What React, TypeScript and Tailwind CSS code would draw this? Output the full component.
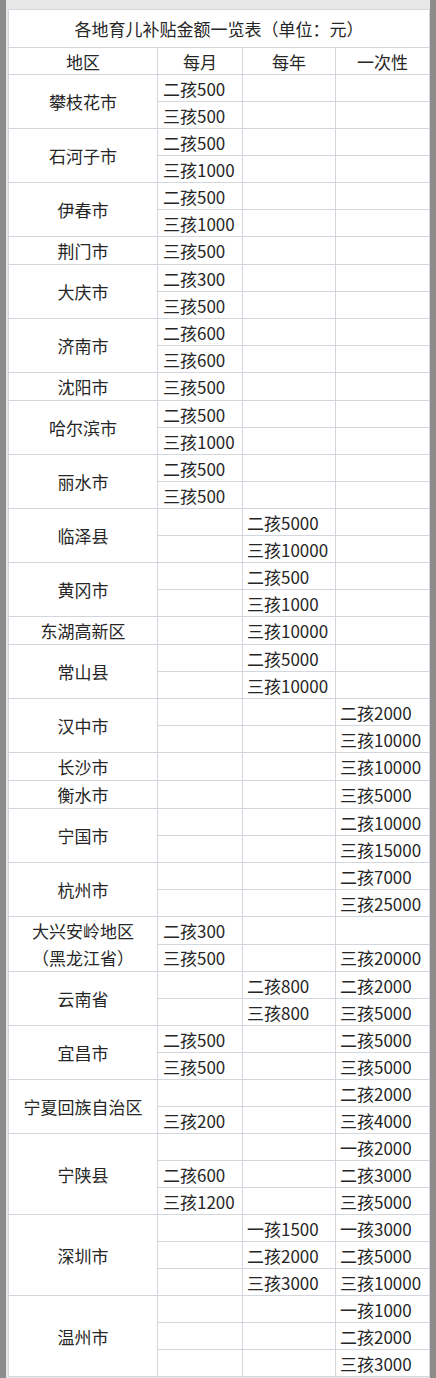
import React from "react";

type Sub = [string, string, string];
type Region = { name: React.ReactNode; rows: Sub[] };

const data: Region[] = [
  { name: "攀枝花市", rows: [["二孩500", "", ""], ["三孩500", "", ""]] },
  { name: "石河子市", rows: [["二孩500", "", ""], ["三孩1000", "", ""]] },
  { name: "伊春市", rows: [["二孩500", "", ""], ["三孩1000", "", ""]] },
  { name: "荆门市", rows: [["三孩500", "", ""]] },
  { name: "大庆市", rows: [["二孩300", "", ""], ["三孩500", "", ""]] },
  { name: "济南市", rows: [["二孩600", "", ""], ["三孩600", "", ""]] },
  { name: "沈阳市", rows: [["三孩500", "", ""]] },
  { name: "哈尔滨市", rows: [["二孩500", "", ""], ["三孩1000", "", ""]] },
  { name: "丽水市", rows: [["二孩500", "", ""], ["三孩500", "", ""]] },
  { name: "临泽县", rows: [["", "二孩5000", ""], ["", "三孩10000", ""]] },
  { name: "黄冈市", rows: [["", "二孩500", ""], ["", "三孩1000", ""]] },
  { name: "东湖高新区", rows: [["", "三孩10000", ""]] },
  { name: "常山县", rows: [["", "二孩5000", ""], ["", "三孩10000", ""]] },
  { name: "汉中市", rows: [["", "", "二孩2000"], ["", "", "三孩10000"]] },
  { name: "长沙市", rows: [["", "", "三孩10000"]] },
  { name: "衡水市", rows: [["", "", "三孩5000"]] },
  { name: "宁国市", rows: [["", "", "二孩10000"], ["", "", "三孩15000"]] },
  { name: "杭州市", rows: [["", "", "二孩7000"], ["", "", "三孩25000"]] },
  {
    name: (
      <>
        大兴安岭地区
        <br />
        （黑龙江省）
      </>
    ),
    rows: [["二孩300", "", ""], ["三孩500", "", "三孩20000"]],
  },
  { name: "云南省", rows: [["", "二孩800", "二孩2000"], ["", "三孩800", "三孩5000"]] },
  { name: "宜昌市", rows: [["二孩500", "", "二孩5000"], ["三孩500", "", "三孩5000"]] },
  { name: "宁夏回族自治区", rows: [["", "", "二孩2000"], ["三孩200", "", "三孩4000"]] },
  {
    name: "宁陕县",
    rows: [["", "", "一孩2000"], ["二孩600", "", "二孩3000"], ["三孩1200", "", "三孩5000"]],
  },
  {
    name: "深圳市",
    rows: [["", "一孩1500", "一孩3000"], ["", "二孩2000", "二孩5000"], ["", "三孩3000", "三孩10000"]],
  },
  {
    name: "温州市",
    rows: [["", "", "一孩1000"], ["", "", "二孩2000"], ["", "", "三孩3000"]],
  },
];

const cell = "border border-[#d3d7dd] p-0";

export default function App() {
  return (
    <div
      className="w-[436px] h-[1378px] bg-[#8c8c8c] flex overflow-hidden"
      style={{ fontFamily: '"Noto Sans CJK SC", "Noto Sans", sans-serif' }}
    >
      <div className="ml-[6px] w-[424px] h-full bg-[#e8e8e8] pt-[9px] pl-[2px]">
        <table className="border-collapse table-fixed w-[421px] bg-white text-[17px] leading-none text-[#262626]">
          <colgroup>
            <col className="w-[149px]" />
            <col className="w-[85px]" />
            <col className="w-[93px]" />
            <col className="w-[94px]" />
          </colgroup>
          <tbody>
            <tr className="h-[38px]">
              <td colSpan={4} className={`${cell} text-center`}>
                各地育儿补贴金额一览表（单位：元）
              </td>
            </tr>
            <tr className="h-[27px]">
              <td className={`${cell} text-center`}>地区</td>
              <td className={`${cell} text-center`}>每月</td>
              <td className={`${cell} text-center`}>每年</td>
              <td className={`${cell} text-center`}>一次性</td>
            </tr>
            {data.map((r, i) =>
              r.rows.map((s, j) => (
                <tr key={`${i}-${j}`} className="h-[27px]">
                  {j === 0 && (
                    <td rowSpan={r.rows.length} className={`${cell} text-center leading-[27px]`}>
                      {r.name}
                    </td>
                  )}
                  <td className={`${cell} pl-[5px] whitespace-nowrap`}>{s[0]}</td>
                  <td className={`${cell} pl-[4px] whitespace-nowrap`}>{s[1]}</td>
                  <td className={`${cell} pl-[4px] whitespace-nowrap`}>{s[2]}</td>
                </tr>
              ))
            )}
          </tbody>
        </table>
      </div>
    </div>
  );
}
